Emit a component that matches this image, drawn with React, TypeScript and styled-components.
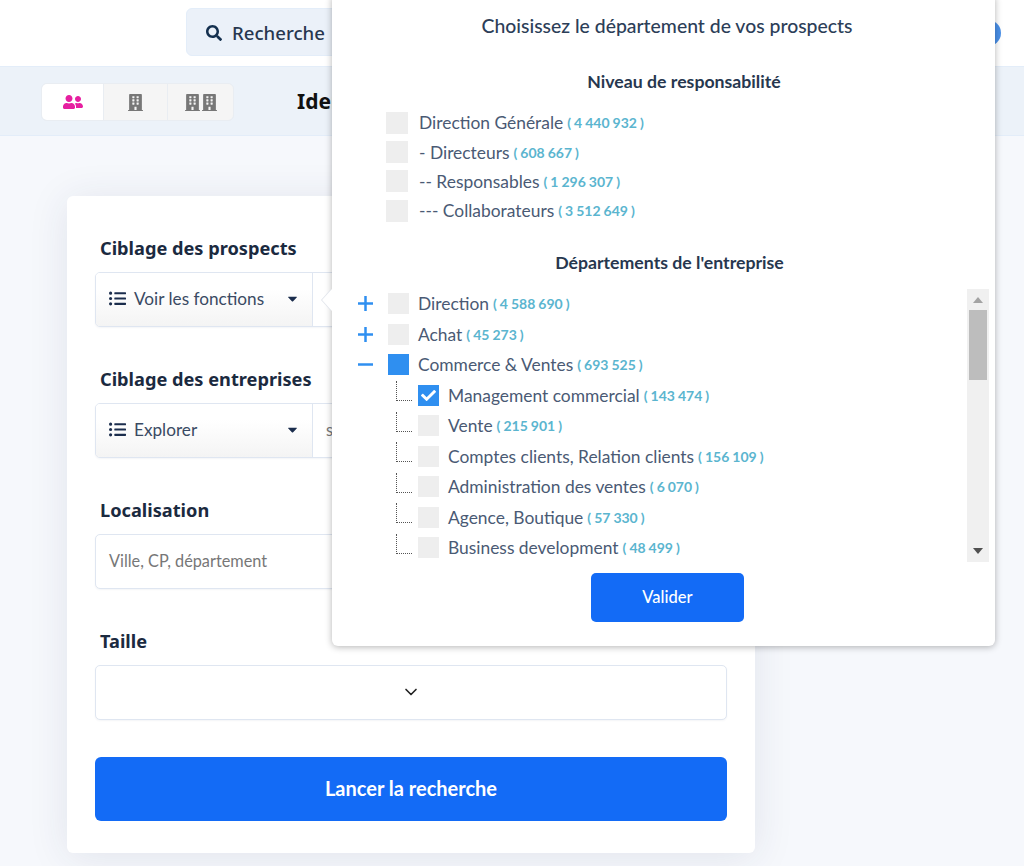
import React from "react";
import styled, { createGlobalStyle } from "styled-components";
import { FaUserFriends, FaBuilding, FaSearch, FaListUl, FaCaretDown, FaCheck } from "react-icons/fa";
import { FiChevronDown } from "react-icons/fi";

const Global = createGlobalStyle`
  html, body { margin: 0; padding: 0; height: 866px; overflow: hidden; background: #f6f8fc; }
  * { box-sizing: border-box; }
  body { font-family: "Lato", sans-serif; color: #27374f; }
`;
const Page = styled.div`position: relative; width: 1024px; height: 866px; overflow: hidden;`;
const Header = styled.header`
  height: 66px; background: #fff; display: flex; align-items: flex-start; padding: 8px 23px 0 186px; justify-content: space-between;
`;
const SearchBox = styled.div`
  width: 500px; height: 48px; border-radius: 6px; background: #ebf1f9; border: 1px solid #e3edf9;
  display: flex; align-items: center; gap: 10px; padding: 1px 0 0 19px; font: 500 18.6px "Noto Sans", sans-serif; color: #27374f;
  svg { color: #14304f; font-size: 16px; }
`;
const Avatar = styled.div`width: 26px; height: 26px; border-radius: 50%; background: #4a90e8; margin-top: 12px;`;
const Toolbar = styled.div`
  height: 70px; background: #ecf2f9; border-top: 1px solid #e3edf9; border-bottom: 1px solid #e3edf9;
  display: flex; align-items: center; padding-left: 41px; gap: 63px;
`;
const Tabs = styled.div`display: flex; height: 38px; margin-top: 2px; border-radius: 6px; overflow: hidden; gap: 1px; background: #e9edf2; border: 1px solid #e9edf2;`;
const Tab = styled.div<{ $active?: boolean; $w: number }>`
  width: ${p => p.$w}px; display: flex; align-items: center; justify-content: center;
  background: ${p => (p.$active ? "#fff" : "#f5f5f5")}; color: ${p => (p.$active ? "#e61fa0" : "#777")};
`;
const ToolbarTitle = styled.h1`margin: 0; font: 700 21px "Noto Sans", sans-serif; color: #111; white-space: nowrap;`;
const Main = styled.main`padding: 60px 0 0 67px;`;
const Card = styled.section`
  width: 688px; height: 657px; background: #fff; border-radius: 6px; padding: 40px 28px 0;
  box-shadow: 0 4px 40px rgba(40, 50, 90, 0.1);
`;
const Group = styled.div<{ $gap: number }>`margin-bottom: ${p => p.$gap}px;`;
const Label = styled.div`
  font: 700 18.2px/24px "Noto Sans", sans-serif; color: #1b2a3f; margin: 0 0 12px 5px;
`;
const Field = styled.div`
  height: 55px; border: 1px solid #dfe6f1; border-radius: 5px; display: flex; align-items: stretch; background: #fff; overflow: hidden;
  box-shadow: 0 1px 2px rgba(60, 80, 120, 0.06);
`;
const SelectPart = styled.div`
  width: 217px; border-right: 1px solid #dfe6f1; background: linear-gradient(#fff 30%, #f4f4f4);
  display: flex; align-items: center; padding: 0 12px 2px 13px; font-size: 17.2px; color: #3a4a63;
  svg:first-child { color: #1b2d4d; font-size: 17px; margin-right: 8px; }
  svg:last-child { color: #1b2d4d; font-size: 15px; margin-left: auto; }
`;
const Placeholder = styled.div<{ $left: number }>`
  display: flex; align-items: center; padding: 0 0 3px ${p => p.$left}px; font-size: 16.3px; color: #777;
`;
const CenterChevron = styled.div`flex: 1; display: flex; align-items: center; justify-content: center; color: #222; font-size: 20px; padding-bottom: 2px;`;
const Submit = styled.button`
  width: 100%; height: 64px; border: none; border-radius: 6px; background: #136bf6; color: #fff;
  font: 700 20px "Lato", sans-serif; display: block; padding-bottom: 3px;
`;
const Popover = styled.aside`
  position: absolute; left: 332px; top: -6px; width: 663px; height: 652px; background: #fff; border-radius: 6px;
  box-shadow: 0 1px 7px rgba(0, 0, 0, 0.3); padding: 6px 6px 0 24px;
`;
const Arrow = styled.div`
  position: absolute; left: -10px; top: 295px; width: 0; height: 0;
  border-top: 11px solid transparent; border-bottom: 11px solid transparent; border-right: 10px solid #fff;
  filter: drop-shadow(-1px 0 0 #dfe3ea);
`;
const PopTitle = styled.h2`
  margin: 0; text-align: center; font: 500 19.4px/52px "Lato", sans-serif; color: #2c3e58; padding-right: 11px; height: 52px;
`;
const SubTitle = styled.h3<{ $top: number; $left?: number; $right?: number }>`
  margin: ${p => p.$top}px 0 0; text-align: center; font: 700 17.7px/22px "Lato", sans-serif; color: #27374f;
  padding: 0 ${p => p.$right ?? 0}px 0 ${p => p.$left ?? 0}px;
`;
const LevelList = styled.div`margin: 15px 0 0 30px;`;
const Row = styled.div<{ $h: number }>`
  height: ${p => p.$h}px; display: flex; align-items: center; font-size: 17.4px; color: #4a5a74; white-space: nowrap;
`;
const Count = styled.span`color: #5bb5cf; font-weight: 700; font-size: 14px; word-spacing: -0.4px; margin-left: 4px;`;
const Box = styled.span<{ $on?: boolean; $size: number; $mr: number }>`
  width: ${p => p.$size}px; height: ${p => p.$size}px; flex: none; margin-right: ${p => p.$mr}px;
  background: ${p => (p.$on ? "#2f8ff0" : "#eeeeee")}; color: #fff; display: flex; align-items: center; justify-content: center; font-size: 15px;
`;
const TreeWrap = styled.div`display: flex; margin-top: 15px; height: 273px; justify-content: space-between;`;
const Tree = styled.div`overflow: hidden;`;
const Toggle = styled.svg`width: 15px; height: 15px; flex: none; margin: 0 15px 0 2px; color: #2f8ff0;`;
const Connector = styled.span`
  width: 16px; height: 20px; flex: none; align-self: flex-start; margin: 1px 6px 0 40px;
  border-left: 1px dotted #555; border-bottom: 1px dotted #555;
`;
const Scrollbar = styled.div`
  width: 22px; height: 273px; background: #f0f0f0; display: flex; flex-direction: column; align-items: center; padding: 2px;
`;
const ScrollArrow = styled.svg<{ $tone: string; $h: number }>`width: 10px; height: ${p => p.$h}px; fill: ${p => p.$tone}; flex: none;`;
const Thumb = styled.div`width: 18px; height: 70px; background: #bdbdbd; flex: none;`;
const ScrollRest = styled.div`flex: 1;`;
const Validate = styled.button`
  display: block; width: 153px; height: 49px; margin: 11px 0 0 235px; border: none; border-radius: 5px; background: #136bf6; color: #fff;
  font: 500 16.5px "Lato", sans-serif; padding-bottom: 2px;
`;

const levels = [
  ["Direction Générale", "( 4 440 932 )"],
  ["- Directeurs", "( 608 667 )"],
  ["-- Responsables", "( 1 296 307 )"],
  ["--- Collaborateurs", "( 3 512 649 )"],
];
const roots = [
  ["Direction", "( 4 588 690 )", "plus"],
  ["Achat", "( 45 273 )", "plus"],
  ["Commerce & Ventes", "( 693 525 )", "minus"],
];
const children = [
  ["Management commercial", "( 143 474 )"],
  ["Vente", "( 215 901 )"],
  ["Comptes clients, Relation clients", "( 156 109 )"],
  ["Administration des ventes", "( 6 070 )"],
  ["Agence, Boutique", "( 57 330 )"],
  ["Business development", "( 48 499 )"],
];

export default function App() {
  return (
    <Page>
      <Global />
      <Header>
        <SearchBox><FaSearch />Recherche</SearchBox>
        <Avatar />
      </Header>
      <Toolbar>
        <Tabs>
          <Tab $active $w={61}><FaUserFriends size={20} /></Tab>
          <Tab $w={63}><FaBuilding size={17} /></Tab>
          <Tab $w={65}><FaBuilding size={17} /><FaBuilding size={17} /></Tab>
        </Tabs>
        <ToolbarTitle>Identifiez vos prospects</ToolbarTitle>
      </Toolbar>
      <Main>
        <Card>
          <Group $gap={40}>
            <Label>Ciblage des prospects</Label>
            <Field>
              <SelectPart><FaListUl />Voir les fonctions<FaCaretDown /></SelectPart>
            </Field>
          </Group>
          <Group $gap={40}>
            <Label>Ciblage des entreprises</Label>
            <Field>
              <SelectPart><FaListUl />Explorer<FaCaretDown /></SelectPart>
              <Placeholder $left={13}>secteur d'activité</Placeholder>
            </Field>
          </Group>
          <Group $gap={40}>
            <Label>Localisation</Label>
            <Field><Placeholder $left={13}>Ville, CP, département</Placeholder></Field>
          </Group>
          <Group $gap={37}>
            <Label>Taille</Label>
            <Field><CenterChevron><FiChevronDown /></CenterChevron></Field>
          </Group>
          <Submit>Lancer la recherche</Submit>
        </Card>
      </Main>
      <Popover>
        <Arrow />
        <PopTitle>Choisissez le département de vos prospects</PopTitle>
        <SubTitle $top={19} $left={23}>Niveau de responsabilité</SubTitle>
        <LevelList>
          {levels.map(([n, c]) => (
            <Row key={n} $h={29.4}><Box $size={22} $mr={11} />{n}<Count>{c}</Count></Row>
          ))}
        </LevelList>
        <SubTitle $top={26} $right={6}>Départements de l'entreprise</SubTitle>
        <TreeWrap>
          <Tree>
            {roots.map(([n, c, kind]) => (
              <Row key={n} $h={30.5}>
                <Toggle viewBox="0 0 15 15" stroke="currentColor" strokeWidth="2.5">
                  <line x1="0" y1="7.5" x2="15" y2="7.5" />
                  {kind === "plus" && <line x1="7.5" y1="0" x2="7.5" y2="15" />}
                </Toggle>
                <Box $size={21} $mr={9} $on={kind === "minus"} />{n}<Count>{c}</Count>
              </Row>
            ))}
            {children.map(([n, c], i) => (
              <Row key={n} $h={30.5}>
                <Connector />
                <Box $size={21} $mr={9} $on={i === 0}>{i === 0 && <FaCheck />}</Box>{n}<Count>{c}</Count>
              </Row>
            ))}
          </Tree>
          <Scrollbar>
            <ScrollArrow $h={19} $tone="#a3a3a3" viewBox="0 0 10 19"><polygon points="0,12 10,12 5,6" /></ScrollArrow>
            <Thumb />
            <ScrollRest />
            <ScrollArrow $h={17} $tone="#505050" viewBox="0 0 10 17"><polygon points="0,5 10,5 5,11" /></ScrollArrow>
          </Scrollbar>
        </TreeWrap>
        <Validate>Valider</Validate>
      </Popover>
    </Page>
  );
}
